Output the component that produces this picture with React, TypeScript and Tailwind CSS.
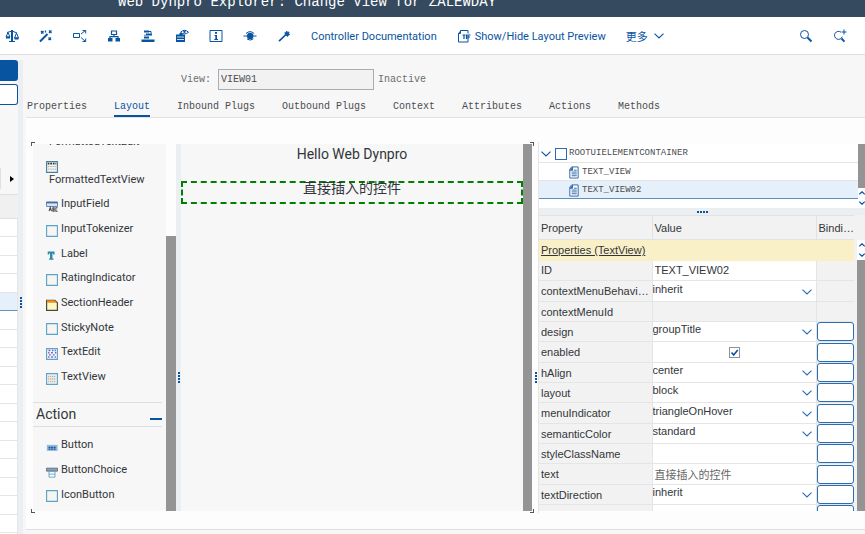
import type { ReactNode } from 'react';
import clsx from 'clsx';

function Icon({ children, className = 'size-[14px]' }: { children: ReactNode; className?: string }) {
  return (
    <svg viewBox="0 0 14 14" className={clsx('shrink-0', className)} fill="none" stroke="currentColor" strokeWidth="1" aria-hidden="true">
      {children}
    </svg>
  );
}

function Chevron({ className = 'h-[6px] w-[10px]' }: { className?: string }) {
  return (
    <svg viewBox="0 0 10 6" className={clsx('shrink-0', className)} fill="none" stroke="currentColor" strokeWidth="1.1" aria-hidden="true">
      <path d="M.5 .7 5 5 9.500 .7" />
    </svg>
  );
}

const toolbarIcons = [
  {
    label: 'Check',
    icon: (
      <Icon>
        <path d="M7 1v11" strokeWidth="2" />
        <path d="M2 3.500 7 2l5 2M4 12.500h6M3 3.500 1 8h4zM11.500 4 9.500 9h4z" />
        <path d="M1 8.500h4M9.500 9.500h4" strokeWidth="2" />
      </Icon>
    ),
  },
  {
    label: 'Activate',
    icon: (
      <Icon>
        <path d="m1 12.500 7.500-7.500" strokeWidth="2" />
        <path d="m2 2 2.500 2.500M4.500 2 2 4.500M10 1.500l2.500 2.500M12.500 1.500 10 4M9.500 8.500 12 11M12 8.500 9.500 11M6.500 1.500v2" strokeWidth="1.300" />
      </Icon>
    ),
  },
  {
    label: 'Where-Used List',
    icon: (
      <Icon>
        <path d="M.5 4.500h6v4h-6zM8 5l4.500-3.500M8 8.500l4.500 4M9.500 1.500h3.200v3M9.500 12.500h3.200v-3" />
      </Icon>
    ),
  },
  {
    label: 'Object List',
    icon: (
      <Icon>
        <path d="M4.500 2h5v3.500h-5zM7 5.500V8M3 9.500V7.700h8v1.800" strokeWidth="1.200" />
        <path d="M1 9h4.500v3.500H1zM8.500 9H13v3.500H8.500z" fill="currentColor" stroke="none" />
      </Icon>
    ),
  },
  {
    label: 'Navigation Stack',
    icon: (
      <Icon>
        <path d="M3 1.500h5v2H3zM5 4.500h6v2H5zM3 7.500h5v2H3zM.5 10.500h13v2.500H.5z" fill="currentColor" stroke="none" />
        <path d="M8 2.500h2v2M4 7V5.500" />
      </Icon>
    ),
  },
  {
    label: 'Display Object',
    icon: (
      <Icon>
        <path d="M1 5.500h3.500V4h3v1.500h2.500V13H1z" fill="currentColor" stroke="none" />
        <path d="M2 8h7M2 10.500h7" stroke="white" strokeWidth=".8" />
        <path d="M5.500 3.300Q9.500-.8 13.500 3.300 9.500 6.500 5.500 3.300z" fill="white" />
        <circle cx="9.500" cy="2.800" r="1.200" fill="currentColor" stroke="none" />
      </Icon>
    ),
  },
  {
    label: 'Information',
    icon: (
      <Icon>
        <path d="M1 1.500h12v11H1z" />
        <path d="M6 3h2v1.800H6zM5.500 6H8v4h1v1H5.300v-1h1V7h-.8z" fill="currentColor" stroke="none" />
      </Icon>
    ),
  },
  {
    label: 'Breakpoint',
    icon: (
      <Icon>
        <path d="M.5 7h13" />
        <circle cx="7.200" cy="7" r="3.200" fill="currentColor" stroke="none" />
        <path d="M3 4.500Q7 .8 11.200 4.500M4 9.900Q7 12.300 10.400 9.900" />
      </Icon>
    ),
  },
  {
    label: 'Wizard',
    icon: (
      <Icon>
        <path d="m2 12.200 6.500-6.200" strokeWidth="1.700" />
        <path d="m9.500 2 1 1.200L12 3l-.3 1.500 1.100 1-1.500.6-.6 1.400-1.200-1-1.600.1.500-1.500-.6-1.400 1.500-.1z" fill="currentColor" stroke="currentColor" strokeWidth=".8" />
      </Icon>
    ),
  },
];

const tabs = ['Properties', 'Layout', 'Inbound Plugs', 'Outbound Plugs', 'Context', 'Attributes', 'Actions', 'Methods'];

type PaletteKind = 'box' | 'input' | 'label' | 'header' | 'edit' | 'view' | 'button' | 'choice' | 'formatted';

function PaletteIcon({ kind }: { kind: PaletteKind }) {
  if (kind === 'label') {
    return (
      <Icon className="size-[12px] text-[#2b87ad]">
        <path d="M2 3h8v3.500H8.500L8 5H7.500v6h1.300v1.500H3.500V11h1.200V5H4L3.500 6.500H2z" fill="currentColor" stroke="none" />
      </Icon>
    );
  }
  if (kind === 'header') {
    return (
      <Icon className="size-[12px] text-[#4b4b35]">
        <path d="M.7 1.500h9.600l3 3v8.800H.7z" fill="#fff7c4" strokeWidth="1.400" />
        <path d="M1 1.500h9l2.500 3H1z" fill="#f28c1c" stroke="none" />
      </Icon>
    );
  }
  if (kind === 'input') {
    return (
      <Icon className="size-[12px] text-[#4a6fa5]">
        <path d="M.5 2.500h13v5H.5z" fill="#dce9f8" />
        <path d="M.5 3h13" strokeWidth="2" />
        <path d="m3.500 13 1.500-4.500L6.500 13M4 11.500h2M8 13V9h1.500v4zM8 11h2M13.500 9H11.500v4h2" stroke="#4c4c4c" strokeWidth="1.200" />
      </Icon>
    );
  }
  if (kind === 'button') {
    return (
      <Icon className="size-[12px] text-[#1d4f91]">
        <path d="M1 4.500h12.500v7H1z" fill="#8dbbe0" stroke="none" />
        <path d="M3 7.500h9M3 9.500h9" strokeWidth="1.600" strokeDasharray="2.200 .8" />
      </Icon>
    );
  }
  if (kind === 'choice') {
    return (
      <Icon className="size-[12px] text-[#56718c]">
        <path d="M.5 2.500h13v3.500H.5z" fill="#8d9bb0" />
        <path d="M3.500 6.500h7v6.500h-7z" fill="white" stroke="#5b9cc0" />
        <path d="M3.500 9.500h7" stroke="#5b9cc0" />
      </Icon>
    );
  }
  return (
    <Icon className={clsx('size-[12px]', kind === 'formatted' ? 'text-[#4a7f9e]' : 'text-[#5ba3cb]')}>
      <path d="M.7.7h12.600v12.600H.7z" fill="#f6f5f1" strokeWidth="1.300" />
      {kind === 'edit' && <path d="M3 3h2M7 3h1.500M10 3h1.500M2.500 5.500h1.500M6 5.500h2M10.500 5.500h1.500M3.500 8h2M8 8h2M2.500 10.500h1.500M6 10.500h2M10 10.500h1.500" stroke="#6a5acd" strokeWidth="1.700" />}
      {kind === 'view' && <path d="M2.500 4h9M2.500 7h9M2.500 10h9" stroke="#b3b3a9" strokeWidth="1.700" strokeDasharray="1.500 .8" />}
      {kind === 'formatted' && (
        <>
          <path d="M2 3h10" stroke="#333" strokeWidth="2" strokeDasharray="2 1" />
          <path d="M2.500 6.500h9M2.500 9.500h9" stroke="#8e9aa3" strokeDasharray="1.500 1" />
        </>
      )}
    </Icon>
  );
}

const simpleItems: { name: string; kind: PaletteKind }[] = [
  { name: 'InputField', kind: 'input' },
  { name: 'InputTokenizer', kind: 'box' },
  { name: 'Label', kind: 'label' },
  { name: 'RatingIndicator', kind: 'box' },
  { name: 'SectionHeader', kind: 'header' },
  { name: 'StickyNote', kind: 'box' },
  { name: 'TextEdit', kind: 'edit' },
  { name: 'TextView', kind: 'view' },
];

const actionItems: { name: string; kind: PaletteKind }[] = [
  { name: 'Button', kind: 'button' },
  { name: 'ButtonChoice', kind: 'choice' },
  { name: 'IconButton', kind: 'box' },
];

function PaletteList({ items }: { items: { name: string; kind: PaletteKind }[] }) {
  return (
    <ul>
      {items.map((item) => (
        <li key={item.name} className="flex h-[25px] items-center gap-[3px] pl-[13px] nth-[3n]:h-6">
          <span className="flex pt-[2px]">
            <PaletteIcon kind={item.kind} />
          </span>
          {item.name}
        </li>
      ))}
    </ul>
  );
}

type Row = { name: string; value?: string; type: 'input' | 'select' | 'check' | 'none'; bind: boolean };

const rows: Row[] = [
  { name: 'ID', value: 'TEXT_VIEW02', type: 'input', bind: false },
  { name: 'contextMenuBehaviour', value: 'inherit', type: 'select', bind: false },
  { name: 'contextMenuId', type: 'none', bind: false },
  { name: 'design', value: 'groupTitle', type: 'select', bind: true },
  { name: 'enabled', type: 'check', bind: true },
  { name: 'hAlign', value: 'center', type: 'select', bind: true },
  { name: 'layout', value: 'block', type: 'select', bind: true },
  { name: 'menuIndicator', value: 'triangleOnHover', type: 'select', bind: true },
  { name: 'semanticColor', value: 'standard', type: 'select', bind: true },
  { name: 'styleClassName', value: '', type: 'input', bind: true },
  { name: 'text', value: '直接插入的控件', type: 'input', bind: true },
  { name: 'textDirection', value: 'inherit', type: 'select', bind: true },
  { name: 'tooltip', value: '', type: 'input', bind: true },
];

function ValueCell({ row }: { row: Row }) {
  if (row.type === 'select') {
    return (
      <div className="relative h-[19px]">
        <select id={row.name} defaultValue={row.value} className="block h-[19px] w-full appearance-none bg-transparent pb-[5px] leading-[14px] outline-none">
          <option>{row.value}</option>
        </select>
        <Chevron className="pointer-events-none absolute right-1 bottom-1.5 h-[6px] w-[10px] text-[#2a6db5]" />
      </div>
    );
  }
  if (row.type === 'check') {
    return (
      <label className="relative mx-auto block size-[11px]">
        <input id={row.name} type="checkbox" defaultChecked className="block size-[11px] appearance-none border border-[#89919a] bg-white" />
        <svg viewBox="0 0 11 11" className="pointer-events-none absolute inset-0 size-[11px]" fill="none" stroke="#0854a0" strokeWidth="1.600" aria-hidden="true">
          <path d="m2.500 5.500 2.200 2.500 4-5" />
        </svg>
      </label>
    );
  }
  if (row.type === 'input') {
    return (
      <input
        id={row.name}
        defaultValue={row.value}
        className={clsx(
          'block h-[19px] w-full bg-transparent pl-[2px] outline-none',
          row.name === 'text' && "font-['Liberation_Serif','Noto_Sans_CJK_SC',serif] text-[#666]"
        )}
      />
    );
  }
  return null;
}

function Stepper() {
  return (
    <div className="flex h-5 flex-col items-end justify-between overflow-hidden bg-white py-[3px] text-[#0854a0]">
      <Chevron className="h-1 w-[6px] rotate-180 stroke-2" />
      <Chevron className="h-1 w-[6px] stroke-2" />
    </div>
  );
}

function Grip({ horizontal = false }: { horizontal?: boolean }) {
  return (
    <span className={clsx('flex gap-[1px]', !horizontal && 'flex-col')}>
      {[0, 1, 2, 3].map((i) => (
        <span key={i} className="size-[2px] bg-[#0854a0]" />
      ))}
    </span>
  );
}

export default function App() {
  return (
    <div className="flex h-screen flex-col overflow-hidden bg-[#f7f7f7] font-['Liberation_Sans','Noto_Sans_CJK_SC',sans-serif] text-[11px] text-[#32363a]">
      <header className="flex h-[17px] shrink-0 items-end overflow-hidden bg-[#354a5f] pb-[7px] pl-[118px]">
        <h1 className="font-['Liberation_Mono',monospace] text-[14px] leading-4 whitespace-nowrap text-white">
          Web Dynpro Explorer: Change View for ZALEWDAY
        </h1>
      </header>

      {/* Toolbar */}
      <div className="flex h-[38px] shrink-0 items-center border-b border-[#e0e0e0] bg-white pr-[18px] pl-[5px] text-[#0854a0]">
        <div className="flex gap-5">
          {toolbarIcons.map((item) => (
            <button key={item.label} type="button" aria-label={item.label}>
              {item.icon}
            </button>
          ))}
        </div>
        <button type="button" className="ml-5 pt-[3px] font-[Roboto,sans-serif] whitespace-nowrap">
          Controller Documentation
        </button>
        <button type="button" className="ml-5 flex items-center gap-1 font-[Roboto,sans-serif] whitespace-nowrap">
          <Icon>
            <path d="M3.500 4.500V1.500h7.500v3M1.500 4.500h2M1.500 4.500v8.500h9.500v-3M1.500 4.500l2.500-3" />
            <path d="M5.500 6h3M7 6v4M9.500 5.500V10M11 10V6h2.500M11 8h2" strokeWidth="1.200" />
          </Icon>
          <span className="pt-[3px]">Show/Hide Layout Preview</span>
        </button>
        <button type="button" className="ml-5 flex items-center gap-1.5 whitespace-nowrap">
          <span className="pt-[3px]">更多</span>
          <Chevron />
        </button>
        <div className="ml-auto flex gap-5">
          <button type="button" aria-label="Search">
            <Icon>
              <circle cx="5.500" cy="5.500" r="4" />
              <path d="m8.500 8.500 4 4" strokeWidth="1.900" />
            </Icon>
          </button>
          <button type="button" aria-label="Search more">
            <Icon>
              <path d="M8 3.200a4 4 0 1 0 1.300 4.500" />
              <path d="m8.500 9.500 3 3.200" strokeWidth="1.900" />
              <path d="M11 .5v5M8.500 3h5" />
            </Icon>
          </button>
        </div>
      </div>

      <div className="flex min-h-0 flex-1 pt-[5px]">
        {/* Object tree, scrolled almost out of view */}
        <aside className="flex w-[18px] shrink-0 flex-col">
          <button type="button" aria-label="Repository" className="h-[21px] shrink-0 rounded-r-[3px] bg-[#0854a0]" />
          <button type="button" aria-label="Local objects" className="mt-[3px] h-[21px] shrink-0 rounded-r-[3px] border border-l-0 border-[#0854a0] bg-white" />
          <div className="mt-[63px] flex h-[21px] shrink-0 items-center border-l border-[#e0e0e0] pl-[9px]">
            <svg viewBox="0 0 4 6" className="h-[6px] w-1" aria-hidden="true">
              <path d="M0 0v6l4-3z" />
            </svg>
          </div>
          <div className="mt-[5px] h-[25px] shrink-0 border-y border-[#e0e0e0] bg-[#f0f0f0]" />
          <div className="min-h-0 flex-1 overflow-hidden">
            {Array.from({ length: 18 }, (_, i) => (
              <div
                key={i}
                className={clsx(
                  'h-[18px] border-r border-b border-[#e5e5e5] even:h-[19px]',
                  i === 4 ? 'border-b-[#0854a0]/60 bg-[#e5f0fa]' : 'bg-white'
                )}
              />
            ))}
          </div>
        </aside>
        <div className="flex w-[5px] shrink-0 items-center justify-center bg-[#eceff1] pt-[10px]">
          <Grip />
        </div>

        <main className="flex min-w-0 flex-1 flex-col pl-[3px]">
          <div className="flex items-center pt-[9px] pl-[155px] font-['Liberation_Mono',monospace] text-[10px] text-[#6a6d70]">
            <label htmlFor="view" className="pr-[7px]">View:</label>
            <input id="view" readOnly defaultValue="VIEW01" className="h-[21px] w-[156px] border border-[#a9adb2] bg-[#f2f2f2] px-[2px] text-[#4a4d50] outline-none" />
            <span className="pl-1">Inactive</span>
          </div>
          <nav className="flex gap-[27px] border-b border-[#e2e2e2] pt-[7px] pl-[1px] font-['Liberation_Mono',monospace] text-[10px] text-[#4a4d50]">
            {tabs.map((tab) => (
              <a
                key={tab}
                href="#"
                className={clsx(
                  'flex h-5 items-center border-b-2 whitespace-nowrap',
                  tab === 'Layout' ? 'border-[#0854a0] text-[#0854a0]' : 'border-transparent'
                )}
              >
                {tab}
              </a>
            ))}
          </nav>

          <div className="flex min-h-0 flex-1 flex-col border-b border-[#e0e0e0] bg-[#fdfdfd] pt-6 pb-4 pl-[5px]">
            <div className="flex min-h-0 flex-1">
              <div className="relative flex min-w-0 flex-1 py-[2px] pr-[2px] pl-[2px]">
                {/* Corner marks */}
                <span className="absolute top-0 left-0 size-1 border-t border-l border-[#555]" />
                <span className="absolute top-0 right-0 size-1 border-t border-r border-[#555]" />
                <span className="absolute bottom-0 left-0 size-1 border-b border-l border-[#555]" />
                <span className="absolute right-0 bottom-0 size-1 border-r border-b border-[#555]" />

                {/* Palette */}
                <section className="flex w-[133px] shrink-0 flex-col justify-end overflow-hidden bg-[#f7f7f7] pb-1 font-[Roboto,sans-serif]">
                  <div className="pl-4 leading-[14px]">FormattedTextEdit</div>
                  <div className="mt-3 pl-[13px]">
                    <PaletteIcon kind="formatted" />
                  </div>
                  <div className="mb-[5px] pl-4 leading-[14px]">FormattedTextView</div>
                  <PaletteList items={simpleItems} />
                  <h2 className="mt-3 mr-1 mb-[6px] flex h-[25px] shrink-0 items-center justify-between border-y border-[#dedede] pl-[3px] text-[14px]">
                    Action
                    <button type="button" aria-label="Collapse" className="mt-2 h-[2px] w-3 bg-[#0854a0]" />
                  </h2>
                  <PaletteList items={actionItems} />
                </section>
                <div className="flex w-[10px] shrink-0 flex-col">
                  <div className="h-1/4" />
                  <div className="flex-1 bg-[#949494]" />
                </div>
                <div className="flex w-[5px] shrink-0 items-center justify-center bg-[#eceff1] pt-[100px]">
                  <Grip />
                </div>

                {/* Preview */}
                <section className="min-w-0 flex-1 bg-[#f7f7f7] text-center font-[Roboto,'Noto_Sans_CJK_SC',sans-serif] text-[14px] leading-5">
                  <p>Hello Web Dynpro</p>
                  <p className="mt-[17px] h-[23px] border-2 border-dashed border-[#008000] leading-[10px]">直接插入的控件</p>
                </section>
                <div className="w-[9px] shrink-0 bg-[#949494]" />
              </div>
              <div className="flex w-1 shrink-0 items-center justify-center pt-[100px]">
                <Grip />
              </div>

              {/* Element tree and properties */}
              <section className="flex w-[327px] shrink-0 flex-col overflow-hidden border-l border-[#e5e5e5] pt-[2px] pb-[2px]">
                <div className="flex h-[64px] shrink-0">
                  <ul className="flex-1 bg-white font-['Liberation_Mono',monospace] text-[9px] text-[#4a4d50]">
                    <li className="flex h-[19px] items-center gap-1 border-b border-[#e5e5e5] pt-[2px] pl-[2px]">
                      <Chevron className="h-[6px] w-[10px] text-[#0854a0]" />
                      <span className="-mr-[2px] size-3 border border-[#2a6db5]" />
                      ROOTUIELEMENTCONTAINER
                    </li>
                    {['TEXT_VIEW', 'TEXT_VIEW02'].map((name) => (
                      <li
                        key={name}
                        className={clsx(
                          'flex h-[18px] items-center gap-[2px] border-b pt-[2px] pl-[28px]',
                          name === 'TEXT_VIEW02' ? 'border-[#5a8fc0] bg-[#e5f0fa]' : 'border-[#e5e5e5]'
                        )}
                      >
                        <Icon className="size-[13px] text-[#2a62a5]">
                          <path d="M5 1h7v12H3V3.500z" fill="white" strokeWidth="1" />
                          <path d="M6 1v3.500H3" fill="currentColor" />
                          <path d="M5 6.500h5.500M5 8.500h5.500M5 10.500h5.500M7.500 4.500h3" />
                        </Icon>
                        {name}
                      </li>
                    ))}
                  </ul>
                  <div className="flex w-[7px] flex-col">
                    <div className="flex-1 bg-[#949494]" />
                    <Stepper />
                  </div>
                </div>
                <div className="flex h-[7px] shrink-0 items-center justify-center bg-[#eceff1]">
                  <Grip horizontal />
                </div>
                <div className="flex min-h-0 flex-1 overflow-hidden bg-[#f2f2f2]">
                  <div className="min-w-0 flex-1">
                    <table className="w-full table-fixed border-collapse text-left leading-4">
                      <thead>
                        <tr className="h-[24px] border-y border-[#e2e2e2]">
                          <th className="w-[113px] border-r border-[#e2e2e2] p-0 pl-[2px] font-normal">Property</th>
                          <th className="border-r border-[#e2e2e2] p-0 pl-[2px] font-normal">Value</th>
                          <th className="w-[38px] truncate p-0 pl-[2px] font-normal">Binding</th>
                        </tr>
                      </thead>
                      <tbody>
                        <tr className="h-[21px] bg-[#faf0c8]">
                          <td colSpan={3} className="p-0 pl-[2px] underline">Properties (TextView)</td>
                        </tr>
                        {rows.map((row) => (
                          <tr key={row.name} className="h-5 border-b border-[#e5e5e5] nth-[3n]:h-[21px]">
                            <td className="truncate border-r border-[#e5e5e5] p-0 pl-[2px]">
                              <label htmlFor={row.name}>{row.name}</label>
                            </td>
                            <td className={clsx('p-0', row.type !== 'none' && 'bg-white')}>
                              <ValueCell row={row} />
                            </td>
                            <td className="border-l border-[#e5e5e5] p-0">
                              {row.bind && (
                                <button
                                  type="button"
                                  aria-label={`Bind ${row.name}`}
                                  className="block h-[19px] w-full rounded-[3px] border border-[#2a6db5] bg-white"
                                />
                              )}
                            </td>
                          </tr>
                        ))}
                      </tbody>
                    </table>
                  </div>
                  <div className="flex w-[11px] shrink-0 flex-col pt-[25px] pl-[3px]">
                    <Stepper />
                    <div className="flex-1 bg-[#949494]" />
                  </div>
                </div>
              </section>
            </div>
          </div>
          <div className="h-1 shrink-0" />
        </main>
      </div>
    </div>
  );
}
